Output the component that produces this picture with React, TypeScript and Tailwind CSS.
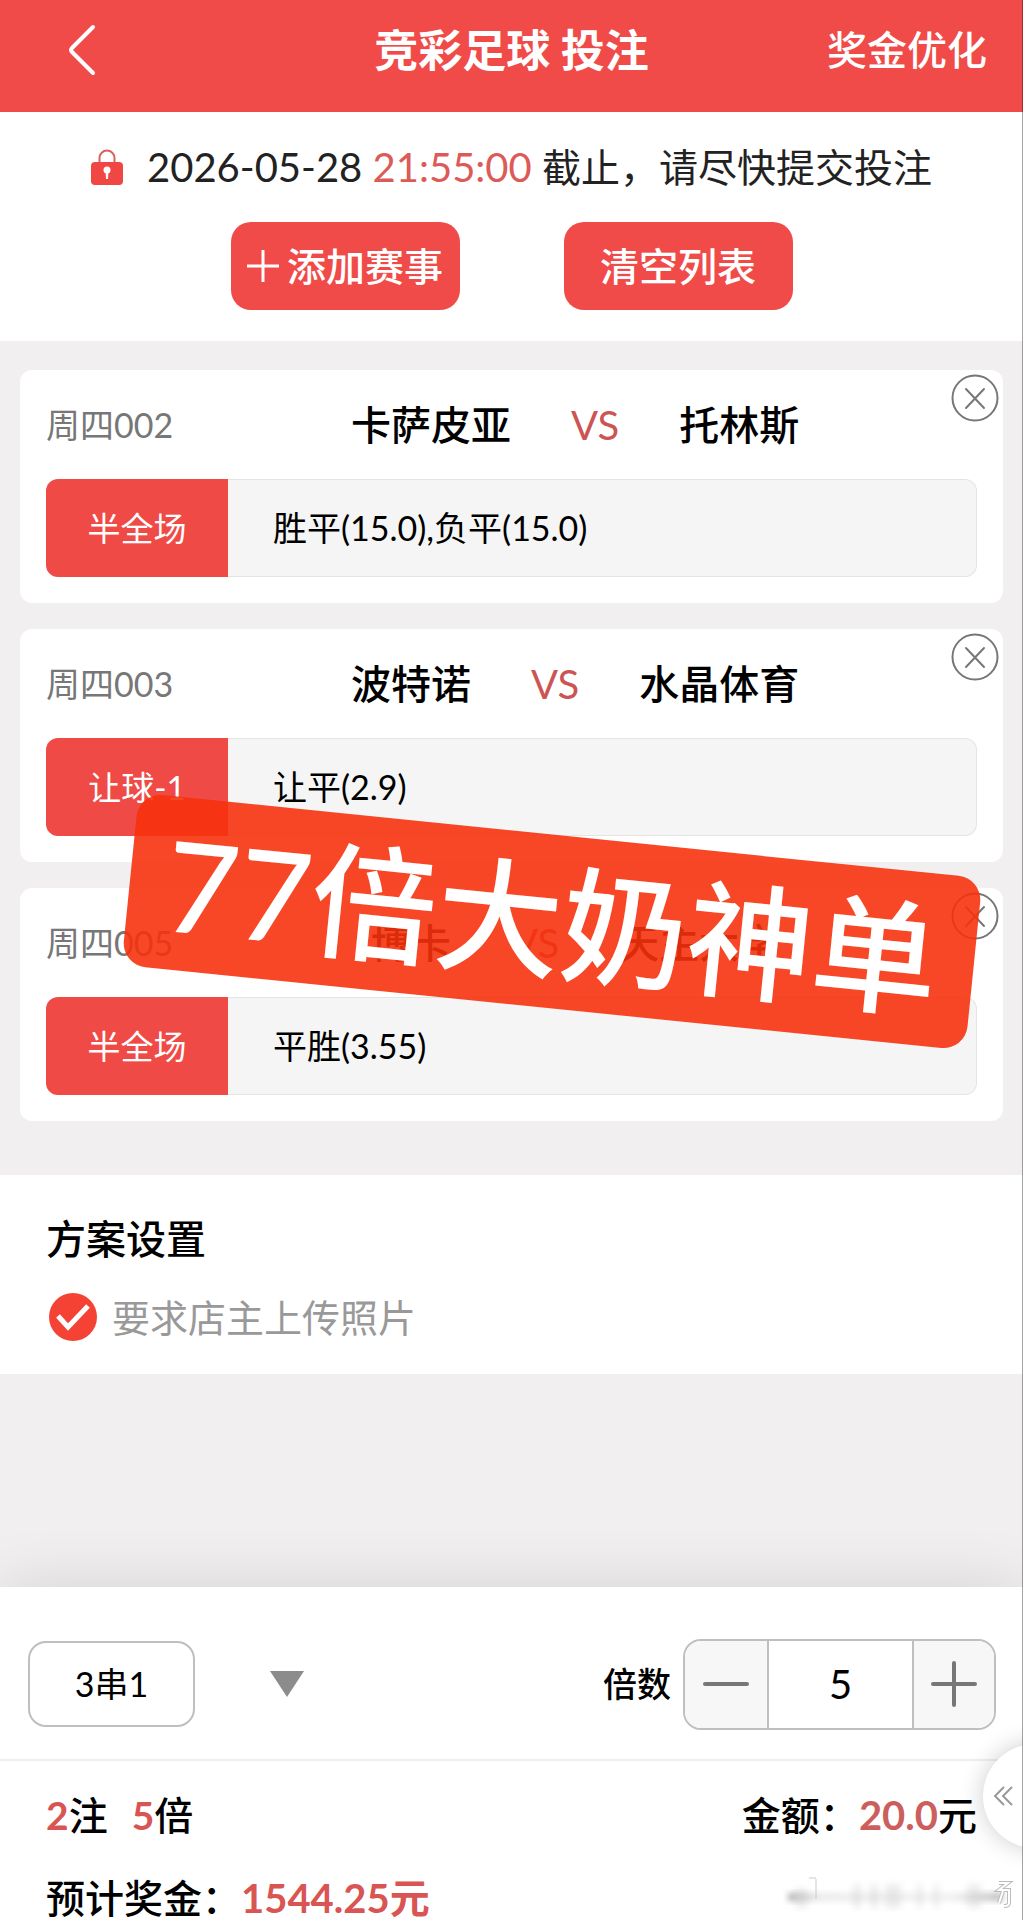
import React, { useState } from 'react';

interface Match {
    id: string;
    home: string;
    away: string;
    play: string;
    pick: string;
}

const MATCHES: Match[] = [
    { id: "周四002", home: "卡萨皮亚", away: "托林斯", play: "半全场", pick: "胜平(15.0),负平(15.0)" },
    { id: "周四003", home: "波特诺", away: "水晶体育", play: "让球-1", pick: "让平(2.9)" },
    { id: "周四005", home: "博卡", away: "天主大学", play: "半全场", pick: "平胜(3.55)" },
];

const BackIcon: React.FC = () => (
    <svg className="w-7 h-13" viewBox="0 0 28 52" fill="none" stroke="currentColor" strokeWidth="4" strokeLinecap="round" strokeLinejoin="round">
        <path d="M25 3 4 24q-2 2 0 4l21 21" />
    </svg>
);

const LockIcon: React.FC = () => (
    <svg className="w-8 h-9 shrink-0" viewBox="0 0 32 36" fill="none">
        <path d="M8.5 14V9a7.5 7.5 0 0 1 15 0v5" stroke="#d9605e" strokeWidth="2" />
        <rect y="13" width="32" height="23" rx="4" fill="#f04644" />
        <circle cx="16" cy="21" r="3.5" fill="#fff" />
        <path d="M14.5 22h3l-.5 8h-2z" fill="#fff" />
    </svg>
);

const CloseIcon: React.FC = () => (
    <svg className="w-12 h-12" viewBox="0 0 48 48" fill="none" stroke="#777" strokeWidth="2" strokeLinecap="round">
        <circle cx="24" cy="24" r="22.5" />
        <path d="m15 15 18 19M33 15 15 34" />
    </svg>
);

// Faded source stamp in the bottom corner
const Stamp: React.FC = () => (
    <svg className="w-[232px] h-9" viewBox="0 0 232 36" fill="none" aria-hidden="true">
        <defs>
            <filter id="soft" x="-10%" y="-50%" width="120%" height="200%">
                <feGaussianBlur stdDeviation="3 3" />
            </filter>
            <linearGradient id="streak">
                <stop offset="0" stopColor="#888" stopOpacity="0.7" />
                <stop offset="0.15" stopColor="#bbb" stopOpacity="0.3" />
                <stop offset="0.75" stopColor="#bbb" stopOpacity="0.2" />
                <stop offset="1" stopColor="#888" stopOpacity="0.6" />
            </linearGradient>
        </defs>
        <path d="M5 17h215v8H5z" fill="url(#streak)" filter="url(#soft)" />
        <path d="M33 3v20M26 2h7" stroke="#ccc" strokeWidth="1" />
        <g fill="#ccc" opacity="0.35" filter="url(#soft)">
            <path d="M12 12h12v20H12zM70 8h8v24h-8zM87 8h8v24h-8zM102 8h16v24h-16zM134 8h5v24h-5zM151 8h5v24h-5zM184 8h14v24h-14z" />
        </g>
        <path d="M216 7h9l-9 7h10v13q0 3-5 3M220 15l-4 12" stroke="#bbb" strokeWidth="4" />
        <path d="M216 7h9l-9 7h10v13q0 3-5 3M220 15l-4 12" stroke="#fff" strokeWidth="2" />
    </svg>
);

const MatchCard: React.FC<{ match: Match }> = ({ match }) => (
    <article className="relative bg-white rounded-xl px-[26px] pt-[30px] pb-[26px]">
        <button aria-label="删除" className="absolute right-1 top-1">
            <CloseIcon />
        </button>
        <div className="flex items-center h-[50px]">
            <span className="text-[34px] text-[#777]">{match.id}</span>
            <h2 className="flex-1 flex justify-center gap-[60px] text-[40px] font-medium text-black">
                <span>{match.home}</span>
                <span className="font-normal text-[#cc5553]">VS</span>
                <span>{match.away}</span>
            </h2>
        </div>
        <div className="mt-[29px] flex h-[98px]">
            <span className="w-[182px] flex items-center justify-center rounded-l-xl bg-[#f04a47] text-[33px] text-white">{match.play}</span>
            <span className="flex-1 flex items-center pl-[45px] rounded-r-xl border border-l-0 border-[#e4e4e4] bg-[#f5f5f5] text-[34px] text-black">{match.pick}</span>
        </div>
    </article>
);

const App: React.FC = () => {
    const [upload, setUpload] = useState(true);
    const [times, setTimes] = useState(5);

    return (
        <div className="relative overflow-hidden bg-[#f1eff0] leading-none font-[Lato,'Noto_Sans_CJK_SC',sans-serif]">
            <header className="h-28 grid grid-cols-3 items-center bg-[#f04b48] text-white px-9 pb-3">
                <button aria-label="返回" className="justify-self-start pl-8">
                    <BackIcon />
                </button>
                <h1 className="justify-self-center whitespace-nowrap text-[44px] font-bold">竞彩足球 投注</h1>
                <a href="#" className="justify-self-end text-[40px] font-medium">奖金优化</a>
            </header>

            <section className="h-[229px] bg-white flex flex-col items-center pt-[30px]">
                <p className="flex items-center h-[50px] text-[39px] text-[#222] whitespace-nowrap">
                    <LockIcon />
                    <span className="ml-6">
                        <span className="text-[40px]">2026-05-28 <span className="text-[#dc5a58]">21:55:00</span> </span>
                        截止，请尽快提交投注
                    </span>
                </p>
                <div className="mt-[30px] flex gap-[104px] text-[39px] font-medium text-white">
                    <button className="w-[229px] h-[88px] rounded-[20px] bg-[#f04b48] flex items-center justify-center gap-2">
                        <svg className="w-8 h-8" viewBox="0 0 32 32" stroke="currentColor" strokeWidth="3">
                            <path d="M0 16h32M16 0v32" />
                        </svg>
                        添加赛事
                    </button>
                    <button className="w-[229px] h-[88px] rounded-[20px] bg-[#f04b48]">清空列表</button>
                </div>
            </section>

            <main className="relative px-5 pt-[29px] pb-[54px] flex flex-col gap-[26px]">
                {MATCHES.map((match) => (
                    <MatchCard key={match.id} match={match} />
                ))}
                {/* Sticker laid across the cards */}
                <div className="absolute left-[54%] top-[494px] -translate-x-1/2 rotate-[5.8deg] w-[848px] h-[173px] rounded-3xl bg-[rgb(246,48,11)]/89 flex items-center justify-center whitespace-nowrap text-[126px] font-medium text-white">
                    77倍大奶神单
                </div>
            </main>

            <section className="h-[199px] bg-white px-[46px] pt-10">
                <h2 className="h-12 flex items-center text-[40px] font-medium text-black">方案设置</h2>
                <label className="mt-[30px] flex items-center h-12 gap-3 text-[38px] text-[#999]">
                    <input type="checkbox" className="sr-only" checked={upload} onChange={() => setUpload(!upload)} />
                    <svg className="w-[54px] h-12" viewBox="-3 0 54 48" fill="none">
                        <circle cx="24" cy="24" r="24" fill={upload ? "#f44334" : "#ccc"} />
                        <path d="m9 23 10 11 20-21" stroke="#fff" strokeWidth="5" />
                    </svg>
                    要求店主上传照片
                </label>
            </section>

            <footer className="relative mt-[213px] bg-white shadow-[0_0_60px_rgba(0,0,0,0.12)] text-black">
                <div className="h-[174px] flex items-center justify-between pl-7 pr-[27px] pt-[22px] border-b-2 border-[#eee]">
                    <div className="flex items-center gap-[75px]">
                        <button className="w-[167px] h-[86px] border-2 border-[#bfbfbf] rounded-[18px] text-[34px]">3串1</button>
                        <svg className="w-[34px] h-[26px]" viewBox="0 0 34 26" fill="#8c8c8c">
                            <path d="M0 0h34L17 26z" />
                        </svg>
                    </div>
                    <div className="flex items-center gap-3">
                        <label htmlFor="times" className="text-[34px] font-medium">倍数</label>
                        <div className="flex h-[91px] border-2 border-[#bfbfbf] rounded-[18px] overflow-hidden">
                            <button aria-label="减少" className="w-[82px] bg-[#f7f7f7] flex items-center justify-center" onClick={() => setTimes(Math.max(1, times - 1))}>
                                <svg className="w-12 h-12" viewBox="0 0 48 48" stroke="#777" strokeWidth="4" strokeLinecap="round">
                                    <path d="M3 24h42" />
                                </svg>
                            </button>
                            <input
                                id="times"
                                className="w-[147px] border-x-2 border-[#bfbfbf] text-center text-[40px]"
                                value={times}
                                onChange={(e) => setTimes(Number(e.target.value) || 1)}
                            />
                            <button aria-label="增加" className="w-[80px] bg-[#f7f7f7] flex items-center justify-center" onClick={() => setTimes(times + 1)}>
                                <svg className="w-12 h-12" viewBox="0 0 48 48" stroke="#777" strokeWidth="4" strokeLinecap="round">
                                    <path d="M3 24h42M24 3v42" />
                                </svg>
                            </button>
                        </div>
                    </div>
                </div>

                <div className="px-[46px] pt-[30px] text-[39px] font-medium">
                    <div className="flex items-center justify-between h-12">
                        <p className="flex gap-6">
                            <span><b className="text-[#d95553]">2</b>注</span>
                            <span><b className="text-[#d95553]">5</b>倍</span>
                        </p>
                        <p>金额：<b className="text-[40px] text-[#cc5f5d]">20.0</b>元</p>
                    </div>
                    <p className="mt-[37px] h-11 flex items-center">
                        预计奖金：<b className="text-[40px] text-[#d95553]">1544.25元</b>
                    </p>
                </div>

                <div className="absolute right-2 bottom-2">
                    <Stamp />
                </div>
                <button aria-label="展开" className="absolute -right-16 top-[157px] w-[104px] h-[104px] rounded-full bg-white shadow-[0_0_24px_rgba(0,0,0,0.2)] pl-[10px]">
                    <svg className="w-5 h-5" viewBox="0 0 20 20" fill="none" stroke="#999" strokeWidth="2">
                        <path d="M11 1 2 10l9 9M19 1l-9 9 9 9" />
                    </svg>
                </button>
            </footer>

            {/* Hairline down the right side of the screen */}
            <div className="absolute inset-y-0 right-0 w-px bg-black/35 pointer-events-none" />
        </div>
    );
};

export default App;
